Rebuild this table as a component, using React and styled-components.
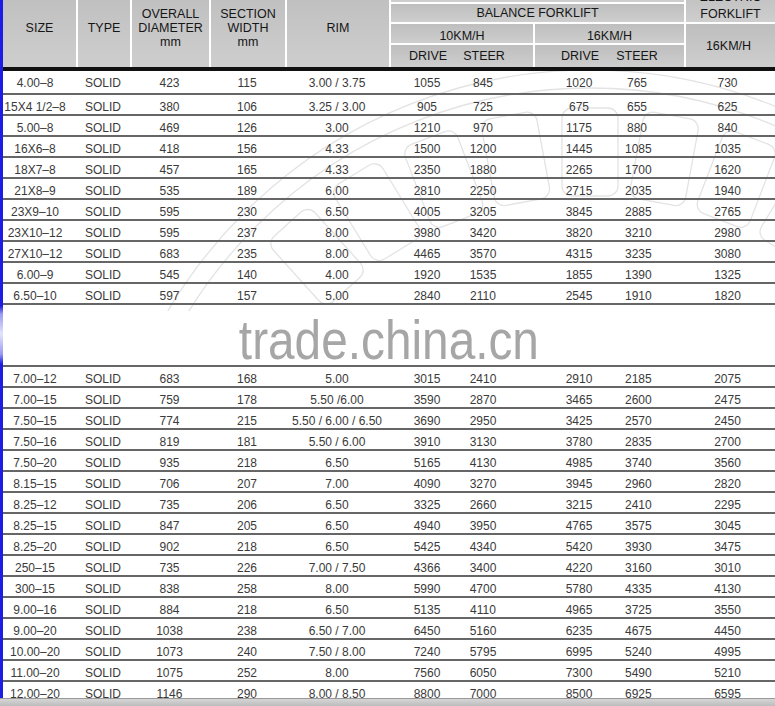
import styled, { createGlobalStyle } from "styled-components"

const COLS = "73px 54px 79px 76px 104px 76px 68px 92px 59px 91px"
// right padding per column, so the text sits where the original table put it
const PR = [9, 0, 0, 0, 0, 0, 32, 0, 35, 4]

const Global = createGlobalStyle`
   html, body {
      margin: 0;
      padding: 0;
      background: #fff;
      overflow: hidden;
   }
   body {
      font-family: "Liberation Sans", Arial, sans-serif;
   }
`

const Page = styled.div`
   height: 100vh;
   display: flex;
   flex-direction: column;
`

const Main = styled.div`
   flex: 1;
   display: flex;
   overflow: hidden;
`

const Stripe = styled.div`
   width: 3px;
   flex: none;
   background: linear-gradient(
      to bottom,
      #1c1ce4 0,
      #1c1ce4 306px,
      #9a9af2 314px,
      #e4e4fc 334px,
      #9a9af2 354px,
      #1c1ce4 364px,
      #1c1ce4 100%
   );
`

const Table = styled.div`
   flex: 1;
   overflow: hidden;
`

const Head = styled.div`
   display: grid;
   grid-template-columns: ${COLS};
   grid-template-rows: 14px 20px 21px 24px;
   margin-top: -12px;
   border-bottom: 4px solid #111;
`

const HCell = styled.div`
   grid-column: ${(p) => p.$col};
   grid-row: ${(p) => p.$row};
   box-sizing: border-box;
   display: flex;
   align-items: center;
   justify-content: center;
   text-align: center;
   background: linear-gradient(#bebebe, #cecece);
   border-left: ${(p) => (p.$sep ? "2px solid #fff" : "none")};
   border-top: ${(p) => (p.$top ? "2px solid #fff" : "none")};
   padding-top: ${(p) => p.$pt || 0}px;
   padding-right: ${(p) => p.$pr || 0}px;
   font-size: 12.5px;
   line-height: ${(p) => p.$lh || 14}px;
   color: #161616;
   white-space: nowrap;
`

const Body = styled.div`
   position: relative;
   z-index: 0;
`

const Tread = styled.svg`
   position: absolute;
   top: 0;
   left: 0;
   z-index: -1;
   pointer-events: none;
`

const Row = styled.div`
   display: grid;
   grid-template-columns: ${COLS};
   box-sizing: border-box;
   height: ${(p) => p.$h || 21}px;
   border-bottom: 2px solid #666;
`

const Cell = styled.div`
   text-align: center;
   padding-top: 5px;
   padding-right: ${(p) => p.$pr}px;
   font-size: 12px;
   line-height: 14px;
   color: #3a3a3a;
   white-space: nowrap;
`

const Gap = styled.div`
   box-sizing: border-box;
   height: 62px;
   border-bottom: 2px solid #666;
   text-align: center;
   padding-top: 10px;
   overflow: hidden;
`

const Mark = styled.span`
   display: inline-block;
   font-size: 56px;
   line-height: 50px;
   color: #a6a6a6;
   transform: scaleX(0.853);
`

const BottomBar = styled.div`
   height: 7px;
   flex: none;
   border-top: 1px solid #9a9a9a;
   background: linear-gradient(#d6d6d6, #bcbcbc);
`

const top = [
   ["4.00–8", "SOLID", "423", "115", "3.00 / 3.75", "1055", "845", "1020", "765", "730"],
   ["15X4 1/2–8", "SOLID", "380", "106", "3.25 / 3.00", "905", "725", "675", "655", "625"],
   ["5.00–8", "SOLID", "469", "126", "3.00", "1210", "970", "1175", "880", "840"],
   ["16X6–8", "SOLID", "418", "156", "4.33", "1500", "1200", "1445", "1085", "1035"],
   ["18X7–8", "SOLID", "457", "165", "4.33", "2350", "1880", "2265", "1700", "1620"],
   ["21X8–9", "SOLID", "535", "189", "6.00", "2810", "2250", "2715", "2035", "1940"],
   ["23X9–10", "SOLID", "595", "230", "6.50", "4005", "3205", "3845", "2885", "2765"],
   ["23X10–12", "SOLID", "595", "237", "8.00", "3980", "3420", "3820", "3210", "2980"],
   ["27X10–12", "SOLID", "683", "235", "8.00", "4465", "3570", "4315", "3235", "3080"],
   ["6.00–9", "SOLID", "545", "140", "4.00", "1920", "1535", "1855", "1390", "1325"],
   ["6.50–10", "SOLID", "597", "157", "5.00", "2840", "2110", "2545", "1910", "1820"],
]

const bottom = [
   ["7.00–12", "SOLID", "683", "168", "5.00", "3015", "2410", "2910", "2185", "2075"],
   ["7.00–15", "SOLID", "759", "178", "5.50 /6.00", "3590", "2870", "3465", "2600", "2475"],
   ["7.50–15", "SOLID", "774", "215", "5.50 / 6.00 / 6.50", "3690", "2950", "3425", "2570", "2450"],
   ["7.50–16", "SOLID", "819", "181", "5.50 / 6.00", "3910", "3130", "3780", "2835", "2700"],
   ["7.50–20", "SOLID", "935", "218", "6.50", "5165", "4130", "4985", "3740", "3560"],
   ["8.15–15", "SOLID", "706", "207", "7.00", "4090", "3270", "3945", "2960", "2820"],
   ["8.25–12", "SOLID", "735", "206", "6.50", "3325", "2660", "3215", "2410", "2295"],
   ["8.25–15", "SOLID", "847", "205", "6.50", "4940", "3950", "4765", "3575", "3045"],
   ["8.25–20", "SOLID", "902", "218", "6.50", "5425", "4340", "5420", "3930", "3475"],
   ["250–15", "SOLID", "735", "226", "7.00 / 7.50", "4366", "3400", "4220", "3160", "3010"],
   ["300–15", "SOLID", "838", "258", "8.00", "5990", "4700", "5780", "4335", "4130"],
   ["9.00–16", "SOLID", "884", "218", "6.50", "5135", "4110", "4965", "3725", "3550"],
   ["9.00–20", "SOLID", "1038", "238", "6.50 / 7.00", "6450", "5160", "6235", "4675", "4450"],
   ["10.00–20", "SOLID", "1073", "240", "7.50 / 8.00", "7240", "5795", "6995", "5240", "4995"],
   ["11.00–20", "SOLID", "1075", "252", "8.00", "7560", "6050", "7300", "5490", "5210"],
   ["12.00–20", "SOLID", "1146", "290", "8.00 / 8.50", "8800", "7000", "8500", "6925", "6595"],
]

function DataRow({ values, h }) {
   return (
      <Row $h={h}>
         {values.map((v, i) => (
            <Cell key={i} $pr={PR[i]}>
               {v}
            </Cell>
         ))}
      </Row>
   )
}

// faint tyre-tread watermark behind the upper rows
function TreadMark() {
   const cx = 587
   const cy = 489
   const blocks = []
   for (let a = -42; a <= 42; a += 10.5) {
      blocks.push(
         <rect
            key={a}
            x={cx - 28}
            y={cy - 452}
            width="56"
            height="88"
            rx="10"
            transform={`rotate(${a} ${cx} ${cy})`}
         />
      )
   }
   return (
      <Tread width="772" height="240" viewBox="0 0 772 240">
         <g fill="none" stroke="#e3e3e3" strokeWidth="1.3">
            <circle cx={cx} cy={cy} r="490" />
            <circle cx={cx} cy={cy} r="472" />
            {blocks}
         </g>
      </Tread>
   )
}

export default function App() {
   return (
      <Page>
         <Global />
         <Main>
            <Stripe />
            <Table>
               <Head>
                  <HCell $col="1" $row="1 / 5">SIZE</HCell>
                  <HCell $col="2" $row="1 / 5" $sep>TYPE</HCell>
                  <HCell $col="3" $row="1 / 5" $sep>
                     OVERALL
                     <br />
                     DIAMETER
                     <br />
                     mm
                  </HCell>
                  <HCell $col="4" $row="1 / 5" $sep>
                     SECTION
                     <br />
                     WIDTH
                     <br />
                     mm
                  </HCell>
                  <HCell $col="5" $row="1 / 5" $sep>RIM</HCell>
                  <HCell $col="6 / 10" $row="1" $sep />
                  <HCell $col="6 / 10" $row="2" $sep $top>BALANCE FORKLIFT</HCell>
                  <HCell $col="6 / 8" $row="3" $sep $top $pt={4}>10KM/H</HCell>
                  <HCell $col="8 / 10" $row="3" $sep $top $pt={4}>16KM/H</HCell>
                  <HCell $col="6" $row="4" $sep $top>DRIVE</HCell>
                  <HCell $col="7" $row="4" $top $pr={30}>STEER</HCell>
                  <HCell $col="8" $row="4" $sep $top>DRIVE</HCell>
                  <HCell $col="9" $row="4" $top $pr={35}>STEER</HCell>
                  <HCell $col="10" $row="1 / 3" $sep $lh={17} $pt={2}>
                     ELECTRIC
                     <br />
                     FORKLIFT
                  </HCell>
                  <HCell $col="10" $row="3 / 5" $sep $top $pr={4}>16KM/H</HCell>
               </Head>

               <Body>
                  <TreadMark />
                  {top.map((r, i) => (
                     <DataRow key={r[0]} values={r} h={i === 0 ? 24 : 21} />
                  ))}
                  <Gap>
                     <Mark>trade.china.cn</Mark>
                  </Gap>
                  {bottom.map((r) => (
                     <DataRow key={r[0]} values={r} />
                  ))}
               </Body>
            </Table>
         </Main>
         <BottomBar />
      </Page>
   )
}
